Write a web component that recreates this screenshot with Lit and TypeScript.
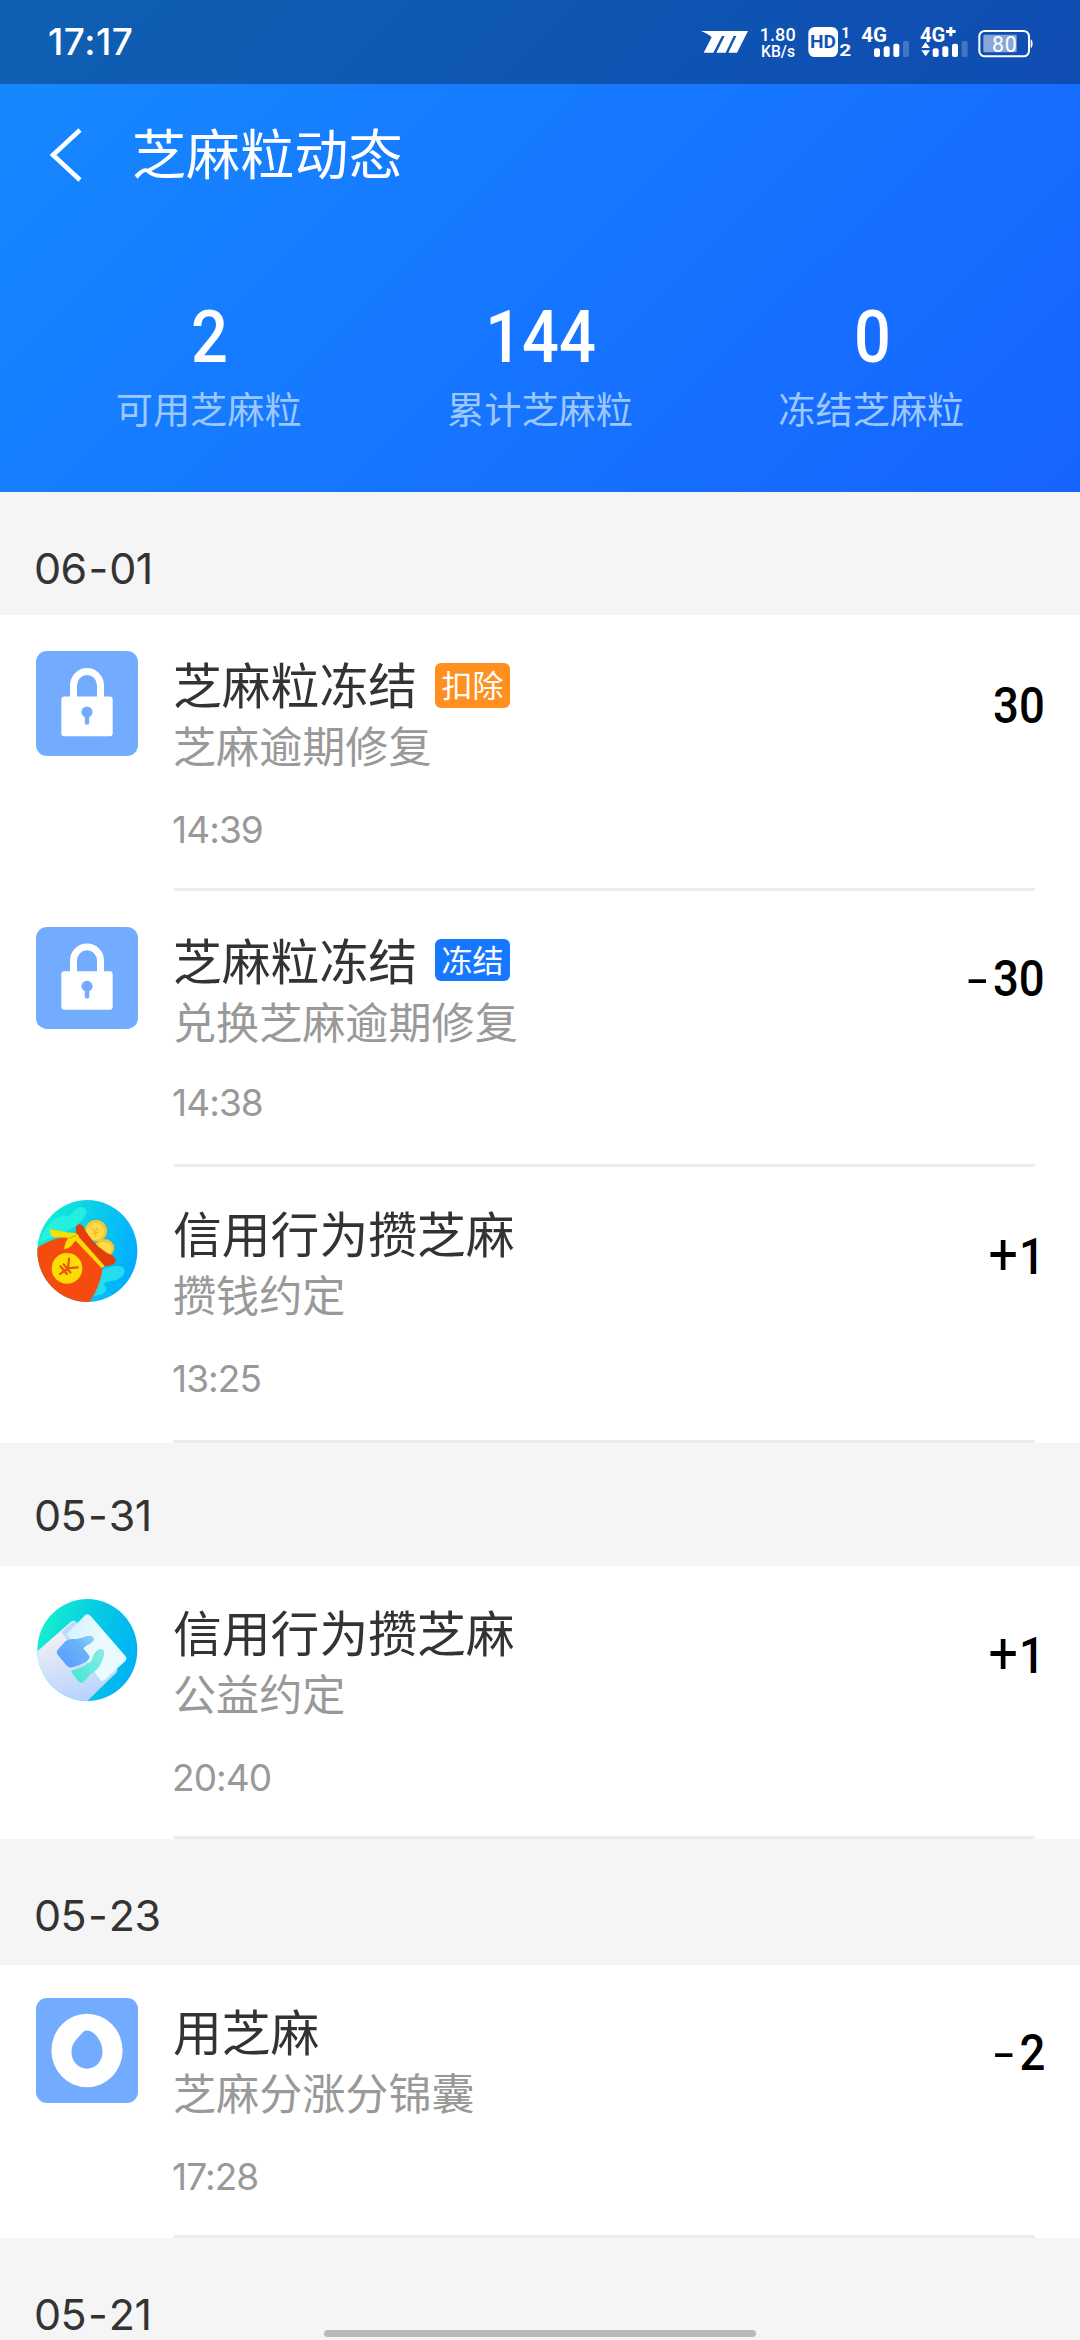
import { LitElement, html, css, svg, nothing } from "lit";
import { customElement, property } from "lit/decorators.js";
import { classMap } from "lit/directives/class-map.js";

type IconName = "lock" | "bag" | "hands" | "sesame";

interface Entry {
  icon: IconName;
  title: string;
  note: string;
  time: string;
  amount: string;
  tag?: { text: string; tone: "orange" | "blue" };
  size: "tall" | "mid" | "base" | "short";
}

interface Group {
  date: string;
  fit?: "raised" | "wide";
  entries: Entry[];
}

const STATS = [
  { value: "2", label: "可用芝麻粒" },
  { value: "144", label: "累计芝麻粒" },
  { value: "0", label: "冻结芝麻粒" },
];

const GROUPS: Group[] = [
  {
    date: "06-01",
    entries: [
      { icon: "lock", title: "芝麻粒冻结", note: "芝麻逾期修复", time: "14:39", amount: "30", tag: { text: "扣除", tone: "orange" }, size: "tall" },
      { icon: "lock", title: "芝麻粒冻结", note: "兑换芝麻逾期修复", time: "14:38", amount: "-30", tag: { text: "冻结", tone: "blue" }, size: "mid" },
      { icon: "bag", title: "信用行为攒芝麻", note: "攒钱约定", time: "13:25", amount: "+1", size: "base" },
    ],
  },
  {
    date: "05-31",
    fit: "raised",
    entries: [{ icon: "hands", title: "信用行为攒芝麻", note: "公益约定", time: "20:40", amount: "+1", size: "short" }],
  },
  {
    date: "05-23",
    fit: "wide",
    entries: [{ icon: "sesame", title: "用芝麻", note: "芝麻分涨分锦囊", time: "17:28", amount: "-2", size: "short" }],
  },
  { date: "05-21", entries: [] },
];

@customElement("status-bar")
class StatusBar extends LitElement {
  static styles = css`
    :host {
      display: flex;
      justify-content: space-between;
      height: 84px;
      padding: 0 47px 0 48px;
      background: rgba(0, 0, 0, 0.3);
      color: #fff;
    }
    .clock {
      font: 500 37px/84px Inter, Roboto, sans-serif;
      letter-spacing: 0.5px;
    }
    .icons {
      display: flex;
      gap: 9px;
    }
    svg {
      display: block;
      height: 84px;
      fill: #fff;
      font-family: Roboto, sans-serif;
    }
    .bold {
      font-weight: 700;
    }
    .medium {
      font-weight: 500;
    }
    .cut {
      fill: #1054b0;
    }
    .dim {
      opacity: 0.22;
    }
    .charge {
      opacity: 0.5;
    }
    .shell {
      fill: none;
      stroke: #fff;
      stroke-width: 6;
    }
  `;

  private bars(x: number) {
    return svg`
      <rect x=${x} y="145" width="18" height="26" rx="6"></rect>
      <rect x=${x + 29} y="139" width="18" height="32" rx="6"></rect>
      <rect x=${x + 58} y="131" width="18" height="40" rx="6"></rect>
      <rect class="dim" x=${x + 87} y="123" width="18" height="48" rx="6"></rect>`;
  }

  render() {
    return html`
      <div class="clock">17:17</div>
      <div class="icons">
        <svg width="49" viewBox="57 0 147 252">
          <path d="M60 93H201L168 158H142L166 108H158L134 158H106L131 108H123L97 158H68L92 112Q82 101 60 93Z"></path>
        </svg>
        <svg width="40" viewBox="231 0 120 252">
          <text class="medium" x="236" y="122" font-size="54" textLength="108">1.80</text>
          <text class="medium" x="240" y="170" font-size="47" textLength="102">KB/s</text>
        </svg>
        <svg width="45" viewBox="377 0 135 252">
          <rect x="381" y="81" width="89" height="90" rx="19"></rect>
          <text class="cut bold" x="386" y="145" font-size="54" textLength="78" lengthAdjust="spacingAndGlyphs">HD</text>
          <text class="bold" x="480" y="115" font-size="44" textLength="26" lengthAdjust="spacingAndGlyphs">1</text>
          <text class="bold" x="474" y="169" font-size="50" textLength="36" lengthAdjust="spacingAndGlyphs">2</text>
        </svg>
        <svg width="49" viewBox="540 0 147 252">
          <text class="bold" x="541" y="125" font-size="59" textLength="77" lengthAdjust="spacingAndGlyphs">4G</text>
          ${this.bars(579)}
        </svg>
        <svg width="49" viewBox="718 0 147 252">
          <text class="bold" x="721" y="125" font-size="59" textLength="76" lengthAdjust="spacingAndGlyphs">4G</text>
          <path d="M809 81h9v9h10v9h-10v10h-9v-10h-10v-9h10z"></path>
          <path d="M738 126l13 18h-26zM738 169l13-18h-26z"></path>
          ${this.bars(759)}
        </svg>
        <svg width="56" viewBox="889 0 168 252">
          <rect class="shell" x="896" y="93" width="149" height="76" rx="16"></rect>
          <rect class="charge" x="908" y="104" width="100" height="53" rx="4"></rect>
          <path d="M1050 117q6 4 6 14t-6 14z"></path>
          <text x="934" y="155" font-size="64" textLength="74">80</text>
        </svg>
      </div>
    `;
  }
}

@customElement("entry-icon")
class EntryIcon extends LitElement {
  @property() name: IconName = "lock";

  static styles = css`
    :host {
      display: block;
    }
    svg {
      display: block;
      width: 100%;
      height: 100%;
    }
  `;

  private lock() {
    return html`<svg viewBox="0 0 102 105" preserveAspectRatio="none">
      <rect width="102" height="105" rx="11" fill="#73acff"></rect>
      <path d="M37.5 50V34.500a13.500 14 0 0 1 27 0V50" fill="none" stroke="#fff" stroke-width="7"></path>
      <rect x="25.300" y="45.500" width="51.400" height="39.700" rx="3" fill="#fff"></rect>
      <circle cx="51" cy="61" r="5.600" fill="#73acff"></circle>
      <rect x="48.800" y="62" width="4.400" height="11.500" rx="1.500" fill="#73acff"></rect>
    </svg>`;
  }

  private sesame() {
    return html`<svg viewBox="0 0 102 105" preserveAspectRatio="none">
      <rect width="102" height="105" rx="11" fill="#73acff"></rect>
      <ellipse cx="51" cy="52.500" rx="35.600" ry="36.800" fill="#fff"></ellipse>
      <path d="M47 34Q50.500 31.500 55 33.500C61 36.500 66.500 45 66.500 53.500C66.500 63 60 70.700 51 70.700C42 70.700 35.500 63 35.500 54C35.500 44 42 40.500 47 34Z" fill="#73acff"></path>
    </svg>`;
  }

  private bag() {
    return html`<svg viewBox="48 60 306 306">
      <defs>
        <linearGradient id="sky" x1="0" y1="0.250" x2="1" y2="0.550">
          <stop offset="0" stop-color="#14f0d4"></stop>
          <stop offset="0.500" stop-color="#0bccec"></stop>
          <stop offset="1" stop-color="#02acff"></stop>
        </linearGradient>
        <clipPath id="disc"><ellipse cx="202" cy="213" rx="150" ry="153"></ellipse></clipPath>
      </defs>
      <g clip-path="url(#disc)">
        <rect x="48" y="60" width="306" height="306" fill="url(#sky)"></rect>
        <path d="M60 180C75 145 92 118 122 108C135 104 146 112 153 104C162 90 176 76 192 83C207 92 195 111 183 124C160 148 120 166 60 186Z" fill="#2cf5dc" opacity="0.750"></path>
        <path d="M240 272C262 262 290 255 306 260C319 266 315 286 300 295C281 306 257 300 250 314C263 321 261 337 245 343L205 352Z" fill="#2be6ef" opacity="0.800"></path>
        <ellipse cx="228" cy="152" rx="33" ry="32" fill="#f8c62e"></ellipse>
        <ellipse cx="226" cy="154" rx="26" ry="26" fill="#ffda49"></ellipse>
        <path d="M217 146l9 9 8-12M226 155l1 15M217 161l18-4" fill="none" stroke="#f3b91d" stroke-width="4"></path>
        <ellipse cx="253" cy="204" rx="30" ry="27" fill="#f8c62e"></ellipse>
        <ellipse cx="252" cy="207" rx="23" ry="21" fill="#ffda49"></ellipse>
        <path d="M168 142C172 130 183 130 190 140C207 174 237 207 272 224C287 232 291 242 284 249C276 257 263 258 250 259L168 177Z" fill="#e33f0b"></path>
        <path d="M40 212C75 184 118 169 164 168L248 262C243 303 228 341 202 374L40 380Z" fill="#f54b0e"></path>
        <path d="M172 166L254 258L245 265L163 178Z" fill="#fbd80d"></path>
        <path d="M89 148C110 149 135 159 158 158Q169 157 177 168Q168 180 160 190C153 200 145 206 133 208C132 196 138 184 145 174C126 171 107 174 97 170Q91 164 89 148Z" fill="#f6e000"></path>
        <path d="M148 175Q158 171 168 166" fill="none" stroke="#e2ae00" stroke-width="4"></path>
        <ellipse cx="141" cy="265" rx="46" ry="46" fill="#fbdc05"></ellipse>
        <path d="M147 236L144 265L173 262M143 265L120 282M121 259L141 282M131 253L151 277" fill="none" stroke="#e4560b" stroke-width="6.500" stroke-linecap="round"></path>
      </g>
    </svg>`;
  }

  private hands() {
    return html`<svg viewBox="48 57 306 306">
      <defs>
        <linearGradient id="sea" x1="0" y1="0.300" x2="1" y2="0.600">
          <stop offset="0" stop-color="#16f2cc"></stop>
          <stop offset="0.500" stop-color="#06cbe5"></stop>
          <stop offset="1" stop-color="#00b0f6"></stop>
        </linearGradient>
        <linearGradient id="back" x1="0.300" y1="0" x2="0.500" y2="1">
          <stop offset="0.200" stop-color="#efeef4"></stop>
          <stop offset="1" stop-color="#b5d2ff"></stop>
        </linearGradient>
        <linearGradient id="card" x1="0" y1="0.300" x2="1" y2="0.600">
          <stop offset="0" stop-color="#d4f2fc"></stop>
          <stop offset="0.600" stop-color="#eefbfe"></stop>
          <stop offset="1" stop-color="#e5fafd"></stop>
        </linearGradient>
        <linearGradient id="upper" x1="0" y1="0.800" x2="1" y2="0">
          <stop offset="0" stop-color="#5a9cff"></stop>
          <stop offset="0.600" stop-color="#69b2fa"></stop>
          <stop offset="1" stop-color="#8ed5f7"></stop>
        </linearGradient>
        <linearGradient id="lower" x1="0" y1="0.800" x2="1" y2="0">
          <stop offset="0" stop-color="#46e8d2"></stop>
          <stop offset="1" stop-color="#8becea"></stop>
        </linearGradient>
        <clipPath id="round"><ellipse cx="202" cy="210" rx="150" ry="153"></ellipse></clipPath>
      </defs>
      <g clip-path="url(#round)">
        <rect x="48" y="57" width="306" height="306" fill="url(#sea)"></rect>
        <path d="M40 224L153 125Q162 118 171 128L291 267Q293 274 287 280L195 370H40Z" fill="url(#back)"></path>
        <path d="M124 157L158 126Q164 121 173 130L289 265Q294 272 288 279L256 304L240 305Z" fill="#b9dcfc"></path>
        <path d="M140 162L195 106Q203 99 212 108L316 228Q322 236 316 243L253 301Q246 305 240 299Z" fill="url(#card)"></path>
        <path d="M112 211L136 184Q144 178 156 177C172 177 182 175 195 170C207 165 218 168 221 174C224 181 215 188 207 193Q197 198 190 205L208 228Q211 235 204 241Q180 259 151 263Q143 262 139 256L111 221Q109 215 112 211Z" fill="url(#upper)"></path>
        <path d="M156 271C181 264 202 255 216 239C218 229 224 216 233 210C241 204 252 206 253 216C253 229 246 243 240 257C233 268 222 276 212 283L190 307Q183 311 176 305L155 277Q153 273 156 271Z" fill="url(#lower)"></path>
      </g>
    </svg>`;
  }

  render() {
    switch (this.name) {
      case "bag":
        return this.bag();
      case "hands":
        return this.hands();
      case "sesame":
        return this.sesame();
      default:
        return this.lock();
    }
  }
}

@customElement("entry-row")
class EntryRow extends LitElement {
  @property({ attribute: false }) entry!: Entry;

  static styles = css`
    :host {
      display: block;
      background: #fff;
    }
    .row {
      display: grid;
      grid-template-columns: 102px 1fr auto;
      column-gap: 36px;
      box-sizing: border-box;
      height: 276px;
      padding: 36px 35px 0 36px;
    }
    .icon {
      height: 102px;
    }
    .tall .icon,
    .sesame .icon {
      height: 105px;
    }
    .base,
    .short {
      padding-top: 33px;
    }
    .short {
      height: 273px;
    }
    .body {
      display: flex;
      flex-direction: column;
      margin-left: -1px;
    }
    .head {
      display: flex;
      align-items: center;
      height: 64px;
      gap: 18px;
    }
    .title {
      font-size: 48.8px;
      line-height: 64px;
      color: #333;
      white-space: nowrap;
    }
    .tag {
      width: 75px;
      height: 45px;
      margin-top: 5px;
      border-radius: 6px;
      color: #fff;
      font-size: 31px;
      line-height: 42px;
      text-align: center;
    }
    .orange {
      background: #ff8f1f;
    }
    .blue {
      height: 42px;
      margin-top: 2px;
      line-height: 40px;
      background: #1677ff;
    }
    .note {
      font-size: 43.1px;
      line-height: 58px;
      color: #999;
    }
    .time {
      margin: 34px 0 0 -1px;
      font: 400 37px/46px Inter, Roboto, sans-serif;
      letter-spacing: -0.9px;
      color: #999;
    }
    .mid .time {
      margin-top: 31px;
    }
    .amount {
      height: 60px;
      padding-top: 25px;
      font: 500 50px/60px Roboto, sans-serif;
      color: #000;
      text-align: right;
      white-space: nowrap;
      transform: scaleX(0.91);
      transform-origin: right;
    }
    .mid .amount {
      padding-top: 22px;
    }
    .sign {
      display: inline-block;
      font-weight: 400;
    }
    .plus {
      font-size: 57px;
      margin-right: 1px;
    }
    .minus {
      margin-right: 6px;
      transform: scaleX(1.6);
      transform-origin: right;
    }
    .line {
      grid-column: 2 / 4;
      align-self: end;
      height: 3px;
      margin-right: 10px;
      background: #ececec;
    }
  `;

  private amount(value: string) {
    const sign = value[0];
    if (sign !== "+" && sign !== "-") return value;
    const classes = { sign: true, plus: sign === "+", minus: sign === "-" };
    return html`<span class=${classMap(classes)}>${sign}</span>${value.slice(1)}`;
  }

  render() {
    const e = this.entry;
    return html`
      <div class=${classMap({ row: true, [e.size]: true, [e.icon]: true })}>
        <entry-icon class="icon" .name=${e.icon}></entry-icon>
        <div class="body">
          <div class="head">
            <span class="title">${e.title}</span>
            ${e.tag ? html`<span class=${classMap({ tag: true, [e.tag.tone]: true })}>${e.tag.text}</span>` : nothing}
          </div>
          <div class="note">${e.note}</div>
          <div class="time">${e.time}</div>
        </div>
        <div class="amount">${this.amount(e.amount)}</div>
        <div class="line"></div>
      </div>
    `;
  }
}

@customElement("app-root")
class AppRoot extends LitElement {
  static styles = css`
    :host {
      display: block;
      position: relative;
      width: 1080px;
      height: 2340px;
      overflow: hidden;
      background: #f5f5f5;
      font-family: "Noto Sans CJK SC", sans-serif;
    }
    .hero {
      height: 492px;
      background: linear-gradient(135deg, #168aff 0%, #1677ff 50%, #1664ff 100%);
      color: #fff;
    }
    .nav {
      display: flex;
      align-items: center;
      height: 136px;
      padding-left: 46px;
      gap: 46px;
    }
    .back {
      width: 40px;
      height: 60px;
      margin-top: 6px;
      fill: none;
      stroke: #fff;
      stroke-width: 4.6;
    }
    .heading {
      font-size: 54.1px;
      line-height: 80px;
    }
    .stats {
      display: flex;
      padding: 77px 43px 0;
    }
    .stat {
      flex: 1;
      text-align: center;
    }
    .value {
      padding-left: 2px;
      font: 500 73px/80px Roboto, sans-serif;
      transform: scaleX(0.89);
    }
    .label {
      margin-top: 5px;
      font-size: 37.2px;
      line-height: 52px;
      color: #9cc8ff;
    }
    .date {
      box-sizing: border-box;
      height: 123px;
      padding: 46px 0 0 34px;
      font: 400 43px/60px Inter, Roboto, sans-serif;
      letter-spacing: -0.6px;
      color: #333;
    }
    .date.raised {
      padding-top: 42px;
    }
    .date.wide {
      height: 126px;
    }
    .dash {
      margin: 0 1.5px 0 2px;
    }
    .home {
      position: absolute;
      left: 324px;
      bottom: 3px;
      width: 432px;
      height: 7px;
      border-radius: 4px;
      background: #b9b9b9;
    }
  `;

  render() {
    return html`
      <header class="hero">
        <status-bar></status-bar>
        <div class="nav">
          <svg class="back" viewBox="46 125 40 60"><path d="M80 130L53 155L80 180"></path></svg>
          <span class="heading">芝麻粒动态</span>
        </div>
        <div class="stats">
          ${STATS.map(
            (s) => html`<div class="stat">
              <div class="value">${s.value}</div>
              <div class="label">${s.label}</div>
            </div>`
          )}
        </div>
      </header>
      ${GROUPS.map((g) => {
        const [month, day] = g.date.split("-");
        return html`<section>
          <div class=${classMap({ date: true, raised: g.fit === "raised", wide: g.fit === "wide" })}>${month}<span class="dash">-</span>${day}</div>
          ${g.entries.map((e) => html`<entry-row .entry=${e}></entry-row>`)}
        </section>`;
      })}
      <div class="home"></div>
    `;
  }
}
